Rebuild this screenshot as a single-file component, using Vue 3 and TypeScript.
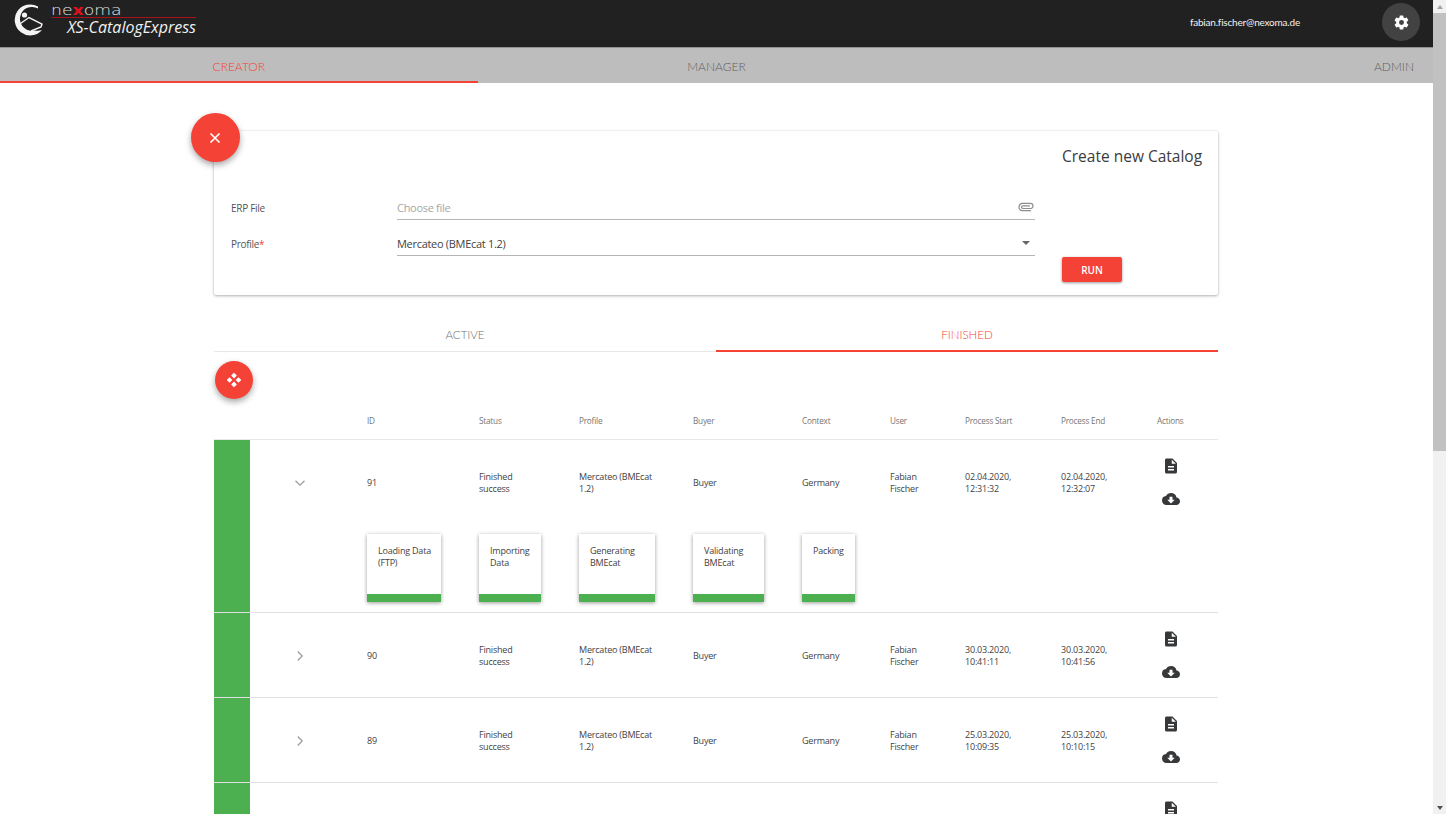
<script setup lang="ts">
interface Stage { label: string; width: number; column: number }
interface Run { id: number; start: [string, string]; end: [string, string]; open: boolean }

const tabs = ['CREATOR', 'MANAGER', 'ADMIN']
const columns = ['ID', 'Status', 'Profile', 'Buyer', 'Context', 'User', 'Process Start', 'Process End', 'Actions']
const stages: Stage[] = [
  { label: 'Loading Data (FTP)', width: 74, column: 3 },
  { label: 'Importing Data', width: 62, column: 4 },
  { label: 'Generating BMEcat', width: 76, column: 5 },
  { label: 'Validating BMEcat', width: 71, column: 6 },
  { label: 'Packing', width: 53, column: 7 }
]
const runs: Run[] = [
  { id: 91, start: ['02.04.2020,', '12:31:32'], end: ['02.04.2020,', '12:32:07'], open: true },
  { id: 90, start: ['30.03.2020,', '10:41:11'], end: ['30.03.2020,', '10:41:56'], open: false },
  { id: 89, start: ['25.03.2020,', '10:09:35'], end: ['25.03.2020,', '10:10:15'], open: false }
]
</script>

<template>
  <div class="shell">
    <div class="page">
      <header class="topbar">
        <div class="brand">
          <svg class="mark" width="31" height="33" viewBox="13 3 31 33">
            <path d="M38 6.5A15.5 15.5 0 1 0 42 30C39 31 37 30.8 35 30.5A12 12 0 1 1 38 8.5Z" fill="#f4f4f4" />
            <circle cx="24.5" cy="15" r="2.6" fill="#f4f4f4" />
            <path d="M19 24.5 29 17.5 42 24 41 27 31 31" fill="none" stroke="#f4f4f4" stroke-width="1.4" />
          </svg>
          <div class="wordmark">
            <div class="rule">
              <div class="nexoma">ne<b>x</b>oma</div>
            </div>
            <div class="product">XS-CatalogExpress</div>
          </div>
        </div>
        <span class="email">fabian.fischer@nexoma.de</span>
        <button class="gear" aria-label="Settings">
          <svg width="17" height="17" viewBox="0 0 24 24"><path fill="#fff" fill-rule="evenodd" d="M19.4 13c.04-.32.1-.66.1-1s-.06-.68-.1-1l2.1-1.65c.2-.15.25-.42.12-.64l-2-3.46c-.12-.22-.39-.3-.61-.22l-2.49 1c-.52-.4-1.08-.73-1.69-.98l-.38-2.65A.49.49 0 0 0 14 2h-4c-.25 0-.46.18-.49.42l-.38 2.65c-.61.25-1.17.59-1.69.98l-2.49-1c-.23-.09-.49 0-.61.22l-2 3.46c-.13.22-.07.49.12.64L4.57 11c-.04.32-.07.65-.07 1s.03.68.07 1l-2.11 1.65c-.19.15-.25.42-.12.64l2 3.46c.12.22.39.3.61.22l2.49-1c.52.4 1.08.73 1.69.98l.38 2.65c.03.24.24.42.49.42h4c.25 0 .46-.18.49-.42l.38-2.65c.61-.25 1.17-.59 1.69-.98l2.49 1c.23.09.49 0 .61-.22l2-3.46c.12-.22.07-.49-.12-.64ZM12 15.5a3.5 3.5 0 1 1 0-7 3.5 3.5 0 0 1 0 7Z" /></svg>
        </button>
      </header>

      <nav class="main-tabs">
        <div v-for="(tab, i) in tabs" :key="tab" class="main-tab" :class="{ active: i === 0 }">{{ tab }}</div>
      </nav>

      <main class="content">
        <section class="card">
          <button class="fab close" aria-label="Close">
            <svg width="14" height="14" viewBox="0 0 14 14"><path d="M2.5 2.5 11.5 11.5M11.5 2.5 2.5 11.5" stroke="#fff" stroke-width="1.7" /></svg>
          </button>
          <div class="form">
            <div class="field">
              <label>ERP File</label>
              <div class="input placeholder">
                <span>Choose file</span>
                <svg class="clip" width="16" height="10" viewBox="0 0 16 10"><path d="M13 8.7H4.2C2.4 8.7 1 7.2 1 5.2S2.4 1.3 4.4 1.3h7.8C13.8 1.3 15 2.5 15 3.9s-1.2 2.6-2.7 2.6H5c-.8 0-1.5-.6-1.5-1.4S4.1 3.8 5 3.8h7" fill="none" stroke="#8d8d8d" stroke-width="1.2" /></svg>
              </div>
            </div>
            <div class="field">
              <label>Profile<em>*</em></label>
              <div class="input">
                <span>Mercateo (BMEcat 1.2)</span>
                <i class="caret"></i>
              </div>
            </div>
          </div>
          <aside class="card-side">
            <h1>Create new Catalog</h1>
            <button class="run">RUN</button>
          </aside>
        </section>

        <div class="sub-tabs">
          <div class="sub-tab">ACTIVE</div>
          <div class="sub-tab active">FINISHED</div>
        </div>

        <button class="fab move" aria-label="Move">
          <svg width="16" height="16" viewBox="0 0 18 18" fill="#fff"><path d="M9 .8 12.2 4 9 7.2 5.8 4ZM4 5.8 7.2 9 4 12.2.8 9ZM14 5.8 17.2 9 14 12.2 10.8 9ZM9 10.8 12.2 14 9 17.2 5.8 14Z" /></svg>
        </button>

        <div class="table">
          <div class="grid head">
            <span></span><span></span>
            <span v-for="c in columns" :key="c" class="cell">{{ c }}</span>
          </div>
          <div v-for="run in runs" :key="run.id" class="grid row">
            <div class="state"></div>
            <svg class="chevron" width="12" height="12" viewBox="0 0 12 12">
              <path v-if="run.open" d="M1.5 3.8 6 8.2 10.5 3.8" fill="none" stroke="#9e9e9e" stroke-width="1.3" />
              <path v-else d="M3.8 1.5 8.2 6 3.8 10.5" fill="none" stroke="#9e9e9e" stroke-width="1.3" />
            </svg>
            <span class="cell">{{ run.id }}</span>
            <span class="cell">Finished<br />success</span>
            <span class="cell">Mercateo (BMEcat 1.2)</span>
            <span class="cell">Buyer</span>
            <span class="cell">Germany</span>
            <span class="cell">Fabian<br />Fischer</span>
            <span class="cell">{{ run.start[0] }}<br />{{ run.start[1] }}</span>
            <span class="cell">{{ run.end[0] }}<br />{{ run.end[1] }}</span>
            <div class="actions">
              <svg width="18" height="18" viewBox="0 0 24 24"><path fill="#37383a" d="M14 2H6c-1.1 0-2 .9-2 2v16c0 1.1.9 2 2 2h12c1.1 0 2-.9 2-2V8l-6-6Zm2 16H8v-2h8v2Zm0-4H8v-2h8v2Zm-3-5V3.5L18.5 9H13Z" /></svg>
              <svg width="18" height="18" viewBox="0 0 24 24"><path fill="#37383a" d="M19.35 10.04A7.49 7.49 0 0 0 12 4C9.11 4 6.6 5.64 5.35 8.04A5.994 5.994 0 0 0 0 14c0 3.31 2.69 6 6 6h13c2.76 0 5-2.24 5-5 0-2.64-2.05-4.78-4.65-4.96ZM17 13l-5 5-5-5h3V9h4v4h3Z" /></svg>
            </div>
            <template v-if="run.open">
              <div
                v-for="s in stages"
                :key="s.label"
                class="stage"
                :style="{ width: s.width + 'px', gridColumn: s.column }"
              >
                <span>{{ s.label }}</span>
              </div>
            </template>
          </div>
          <div class="grid row last">
            <div class="state"></div>
            <div class="actions">
              <svg width="18" height="18" viewBox="0 0 24 24"><path fill="#37383a" d="M14 2H6c-1.1 0-2 .9-2 2v16c0 1.1.9 2 2 2h12c1.1 0 2-.9 2-2V8l-6-6Zm2 16H8v-2h8v2Zm0-4H8v-2h8v2Zm-3-5V3.5L18.5 9H13Z" /></svg>
              <svg width="18" height="18" viewBox="0 0 24 24"><path fill="#37383a" d="M19.35 10.04A7.49 7.49 0 0 0 12 4C9.11 4 6.6 5.64 5.35 8.04A5.994 5.994 0 0 0 0 14c0 3.31 2.69 6 6 6h13c2.76 0 5-2.24 5-5 0-2.64-2.05-4.78-4.65-4.96ZM17 13l-5 5-5-5h3V9h4v4h3Z" /></svg>
            </div>
          </div>
        </div>
      </main>
    </div>

    <div class="scrollbar">
      <i class="arrow up"></i>
      <div class="thumb"></div>
      <i class="arrow down"></i>
    </div>
  </div>
</template>

<style>
html, body { margin: 0; height: 100%; overflow: hidden; background: #fff; }
</style>

<style scoped>
.shell {
  display: flex;
  width: 1446px;
  height: 814px;
  overflow: hidden;
  font-family: "Open Sans", "Noto Sans", sans-serif;
  color: #424242;
}
.page { width: 1433px; height: 814px; overflow: hidden; flex: none; }

.topbar {
  height: 47px;
  background: #212121;
  display: flex;
  align-items: center;
  padding: 0 13px 0 13px;
  border-bottom: 1px solid #8f8f8f;
  box-sizing: content-box;
}
.brand { display: flex; align-items: flex-start; flex: 1; height: 47px; padding-top: 3px; box-sizing: border-box; }
.wordmark { margin-left: 7px; width: 145px; }
.rule { height: 14px; border-bottom: 1px solid #a8101a; }
.nexoma {
  font-family: "DejaVu Sans", sans-serif;
  font-size: 14px;
  font-weight: 200;
  line-height: 14px;
  color: #e4e4e4;
  transform: scaleX(1.23);
  transform-origin: left center;
  white-space: nowrap;
}
.nexoma b { color: #e3101a; font-weight: 700; }
.product {
  font-style: italic;
  font-size: 16px;
  line-height: 19px;
  color: #f0f0f0;
  text-align: right;
  white-space: nowrap;
}
.email {
  font-family: Lato, sans-serif;
  font-size: 10px;
  letter-spacing: -0.2px;
  color: #f2f2f2;
  margin-right: 82px;
  margin-top: -3px;
}
.gear {
  width: 38px;
  height: 38px;
  border-radius: 50%;
  border: 0;
  padding: 0;
  background: #424242;
  display: flex;
  align-items: center;
  justify-content: center;
  margin-top: -3px;
}

.main-tabs {
  display: flex;
  height: 35px;
  background: #bdbdbd;
}
.main-tab {
  flex: 0 0 33.3333%;
  display: flex;
  align-items: center;
  font-family: Lato, sans-serif;
  font-size: 12px;
  font-weight: 300;
  color: #5f5f5f;
  box-sizing: border-box;
  padding: 1px 0 0;
  justify-content: center;
}
.main-tab:last-child { justify-content: flex-end; padding-right: 19px; }
.main-tab.active { color: #f44336; border-bottom: 2px solid #f44336; padding-top: 3px; }

.content { padding: 48px 215px 0 214px; }

.card {
  position: relative;
  height: 164px;
  display: flex;
  background: #fff;
  border-radius: 2px;
  box-shadow: 0 1px 3px rgba(0, 0, 0, 0.3), 0 0 2px rgba(0, 0, 0, 0.08);
  padding: 0 16px 0 17px;
  box-sizing: border-box;
}
.fab {
  border: 0;
  padding: 0;
  background: #f44336;
  border-radius: 50%;
  display: flex;
  align-items: center;
  justify-content: center;
  box-shadow: 0 3px 6px rgba(0, 0, 0, 0.35);
}
.close { position: absolute; left: -23.5px; top: -18px; width: 49px; height: 49px; }
.form { width: 804px; flex: none; padding-top: 60px; }
.field { display: flex; height: 36px; font-size: 10px; letter-spacing: -0.3px; }
.field label { width: 166px; padding-top: 10px; line-height: 14px; color: #555; flex: none; }
.field em { color: #f44336; font-style: normal; }
.input {
  flex: 1;
  height: 24px;
  margin-top: 2px;
  padding: 2px 1px 0 0;
  border-bottom: 1px solid #b5b5b5;
  display: flex;
  align-items: center;
  justify-content: space-between;
  font-size: 11px;
  color: #424242;
  box-sizing: content-box;
}
.input.placeholder { color: #a6a6a6; }
.caret {
  width: 0;
  height: 0;
  border-left: 4px solid transparent;
  border-right: 4px solid transparent;
  border-top: 4px solid #666;
  margin-right: 4px;
}
.card-side { flex: 1; margin-left: 27px; position: relative; }
.card-side h1 {
  margin: 14px 0 0;
  font-weight: 400;
  font-size: 15.5px;
  line-height: 22px;
  color: #3c3c3c;
  white-space: nowrap;
}
.run {
  position: absolute;
  left: 0;
  top: 126px;
  width: 60px;
  height: 25px;
  background: #f44336;
  color: #fff;
  border: 0;
  border-radius: 2px;
  font-family: inherit;
  font-size: 10px;
  font-weight: 600;
  box-shadow: 0 1px 3px rgba(0, 0, 0, 0.4);
}

.sub-tabs { display: flex; margin-top: 23px; height: 33px; border-bottom: 1px solid #e8e8e8; }
.sub-tab {
  flex: 1;
  display: flex;
  align-items: center;
  justify-content: center;
  font-family: Lato, sans-serif;
  font-size: 11.5px;
  font-weight: 300;
  color: #6f6f6f;
  height: 34px;
  padding-bottom: 2px;
  box-sizing: border-box;
}
.sub-tab.active { color: #f44336; border-bottom: 2px solid #f44336; padding-bottom: 0; }

.move { width: 38px; height: 38px; margin: 9px 0 0 1px; }

.table { margin-top: 3px; }
.grid {
  display: grid;
  grid-template-columns: 36px 117px 112px 100px 114px 109px 88px 75px 96px 96px 1fr;
  align-items: center;
}
.head { height: 37px; border-bottom: 1px solid #e6e6e6; color: #757575; }
.cell { font-size: 9px; line-height: 12px; letter-spacing: -0.2px; padding-right: 30px; margin-top: 1px; }
.head .cell { font-size: 8.2px; padding-right: 0; margin-top: 0; white-space: nowrap; }
.row { border-bottom: 1px solid #e0e0e0; grid-template-rows: 84px; }
.state { background: #4caf50; align-self: stretch; grid-row: 1 / 3; grid-column: 1; }
.chevron { grid-column: 2; grid-row: 1; justify-self: center; margin: 1px 18px 0 0; }
.actions {
  display: flex;
  flex-direction: column;
  gap: 15px;
  align-items: flex-start;
  padding: 1px 0 0 5px;
  grid-column: 11;
  grid-row: 1;
}
.stage {
  grid-row: 2;
  height: 68px;
  margin: 10px 0;
  background: #fff;
  box-sizing: border-box;
  padding: 11px 8px 0 11px;
  font-size: 9px;
  letter-spacing: -0.2px;
  line-height: 12px;
  border-bottom: 8px solid #4caf50;
  box-shadow: 0 1px 4px rgba(0, 0, 0, 0.4);
}
.last { border-bottom: 0; }

.scrollbar {
  width: 13px;
  height: 814px;
  flex: none;
  background: #f1f1f1;
  display: flex;
  flex-direction: column;
  align-items: center;
}
.thumb { width: 100%; height: 438px; background: #c1c1c1; margin-top: 4px; }
.arrow { width: 0; height: 0; border-left: 3.5px solid transparent; border-right: 3.5px solid transparent; }
.arrow.up { border-bottom: 4px solid #a3a3a3; margin-top: 5px; }
.arrow.down { border-top: 4px solid #505050; margin-top: auto; margin-bottom: 4px; }
</style>
